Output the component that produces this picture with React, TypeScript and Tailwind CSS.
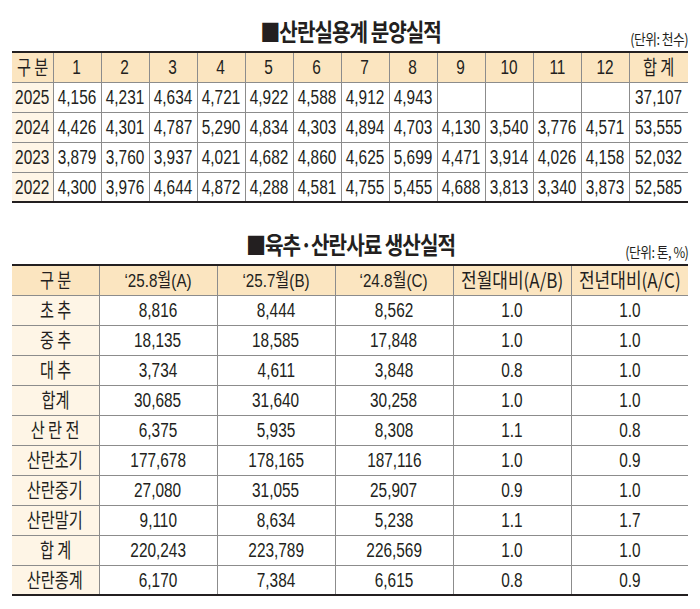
import React from 'react';

const num = "font-['Liberation_Sans','Noto_Sans_CJK_KR',sans-serif]";
const kr = "font-['Noto_Sans_CJK_KR',sans-serif]";

const months = ['1', '2', '3', '4', '5', '6', '7', '8', '9', '10', '11', '12'];

const saleRows: { year: string; vals: string[]; total: string }[] = [
  { year: '2025', vals: ['4,156', '4,231', '4,634', '4,721', '4,922', '4,588', '4,912', '4,943', '', '', '', ''], total: '37,107' },
  { year: '2024', vals: ['4,426', '4,301', '4,787', '5,290', '4,834', '4,303', '4,894', '4,703', '4,130', '3,540', '3,776', '4,571'], total: '53,555' },
  { year: '2023', vals: ['3,879', '3,760', '3,937', '4,021', '4,682', '4,860', '4,625', '5,699', '4,471', '3,914', '4,026', '4,158'], total: '52,032' },
  { year: '2022', vals: ['4,300', '3,976', '4,644', '4,872', '4,288', '4,581', '4,755', '5,455', '4,688', '3,813', '3,340', '3,873'], total: '52,585' },
];

const feedHead = ['‘25.8월(A)', '‘25.7월(B)', '‘24.8월(C)', '전월대비(A/B)', '전년대비(A/C)'];

const feedRows: string[][] = [
  ['초 추', '8,816', '8,444', '8,562', '1.0', '1.0'],
  ['중 추', '18,135', '18,585', '17,848', '1.0', '1.0'],
  ['대 추', '3,734', '4,611', '3,848', '0.8', '1.0'],
  ['합계', '30,685', '31,640', '30,258', '1.0', '1.0'],
  ['산 란 전', '6,375', '5,935', '8,308', '1.1', '0.8'],
  ['산란초기', '177,678', '178,165', '187,116', '1.0', '0.9'],
  ['산란중기', '27,080', '31,055', '25,907', '0.9', '1.0'],
  ['산란말기', '9,110', '8,634', '5,238', '1.1', '1.7'],
  ['합 계', '220,243', '223,789', '226,569', '1.0', '1.0'],
  ['산란종계', '6,170', '7,384', '6,615', '0.8', '0.9'],
];

// condensed look: the source font is narrow, so squeeze glyphs horizontally
function Num({ children }: { children: React.ReactNode }) {
  return (
    <div className="flex justify-center">
      <span className={`${num} inline-block shrink-0 whitespace-nowrap text-[20px] leading-none scale-x-[0.77]`}>{children}</span>
    </div>
  );
}

function Kr({ children, wide = false }: { children: React.ReactNode; wide?: boolean }) {
  return (
    <div className="flex justify-center">
      <span
        className={`${kr} text-[20px] inline-block shrink-0 whitespace-nowrap leading-none ${wide ? 'scale-x-[0.85]' : 'scale-x-[0.76]'}`}
      >
        {children}
      </span>
    </div>
  );
}

function Title({ children, unit }: { children: React.ReactNode; unit: string }) {
  return (
    <div className="grid grid-cols-[1fr_auto_1fr] items-end">
      <div />
      <div className={`${kr} text-[24px] font-bold leading-none text-[#231f20] tracking-[-0.05em] pb-[8px]`}>
        <span className="inline-block scale-x-[0.84]">■{children}</span>
      </div>
      <div className={`${kr} justify-self-end text-[15px] leading-none text-[#231f20] tracking-[-0.04em] pb-[5px]`}>
        <span className="inline-block origin-right scale-x-[0.85]">{unit}</span>
      </div>
    </div>
  );
}

const cellB = 'p-0 border-[#8c8c8c]';

export default function App() {
  return (
    <div className="w-[700px] h-[609px] bg-white px-3 text-[#231f20]">
      {/* ── 산란실용계 분양실적 ── */}
      <div className="h-[51px] flex flex-col justify-end">
        <Title unit="(단위: 천수)">산란실용계 분양실적</Title>
      </div>
      <table className="w-full border-collapse table-fixed border-y-2 border-[#231f20]">
        <colgroup>
          <col className="w-[41px]" />
          {months.map((m) => (
            <col key={m} className="w-[48px]" />
          ))}
          <col />
        </colgroup>
        <thead>
          <tr className="h-[30px] bg-[#fbe5c0]">
            <th className={`${cellB} font-normal border-r border-b`}><Kr>구 분</Kr></th>
            {months.map((m) => (
              <th key={m} className={`${cellB} font-normal border-x border-b`}><Num>{m}</Num></th>
            ))}
            <th className={`${cellB} font-normal border-l border-b`}><Kr>합 계</Kr></th>
          </tr>
        </thead>
        <tbody>
          {saleRows.map((r) => (
            <tr key={r.year} className="h-[30px]">
              <td className={`${cellB} bg-[#fef5e6] border-r border-b`}><Num>{r.year}</Num></td>
              {r.vals.map((v, i) => (
                <td key={i} className={`${cellB} border-x border-b`}><Num>{v}</Num></td>
              ))}
              <td className={`${cellB} border-l border-b`}><Num>{r.total}</Num></td>
            </tr>
          ))}
        </tbody>
      </table>

      {/* ── 육추·산란사료 생산실적 ── */}
      <div className="h-[61px] flex flex-col justify-end">
        <Title unit="(단위: 톤, %)">육추·산란사료 생산실적</Title>
      </div>
      <table className="w-full border-collapse table-fixed border-y-2 border-[#231f20]">
        <colgroup>
          <col className="w-[87px]" />
          <col className="w-[118px]" />
          <col className="w-[118px]" />
          <col className="w-[118px]" />
          <col className="w-[118px]" />
          <col />
        </colgroup>
        <thead>
          <tr className="h-[30px] bg-[#fbe5c0]">
            <th className={`${cellB} font-normal border-r border-b`}><Kr>구 분</Kr></th>
            {feedHead.map((h, i) => (
              <th key={h} className={`${cellB} font-normal border-b ${i < feedHead.length - 1 ? 'border-r' : ''}`}>
                {i < 3 ? (
                  <div className="flex justify-center">
                    <span className={`${num} inline-block shrink-0 whitespace-nowrap text-[19px] leading-none scale-x-[0.8]`}>{h}</span>
                  </div>
                ) : (
                  <Kr wide>{h}</Kr>
                )}
              </th>
            ))}
          </tr>
        </thead>
        <tbody>
          {feedRows.map((r, ri) => (
            <tr key={ri} className="h-[30px]">
              <td className={`${cellB} bg-[#fef5e6] border-r border-b`}><Kr>{r[0]}</Kr></td>
              {r.slice(1).map((v, i) => (
                <td key={i} className={`${cellB} border-b ${i < 4 ? 'border-r' : ''}`}><Num>{v}</Num></td>
              ))}
            </tr>
          ))}
        </tbody>
      </table>
    </div>
  );
}
